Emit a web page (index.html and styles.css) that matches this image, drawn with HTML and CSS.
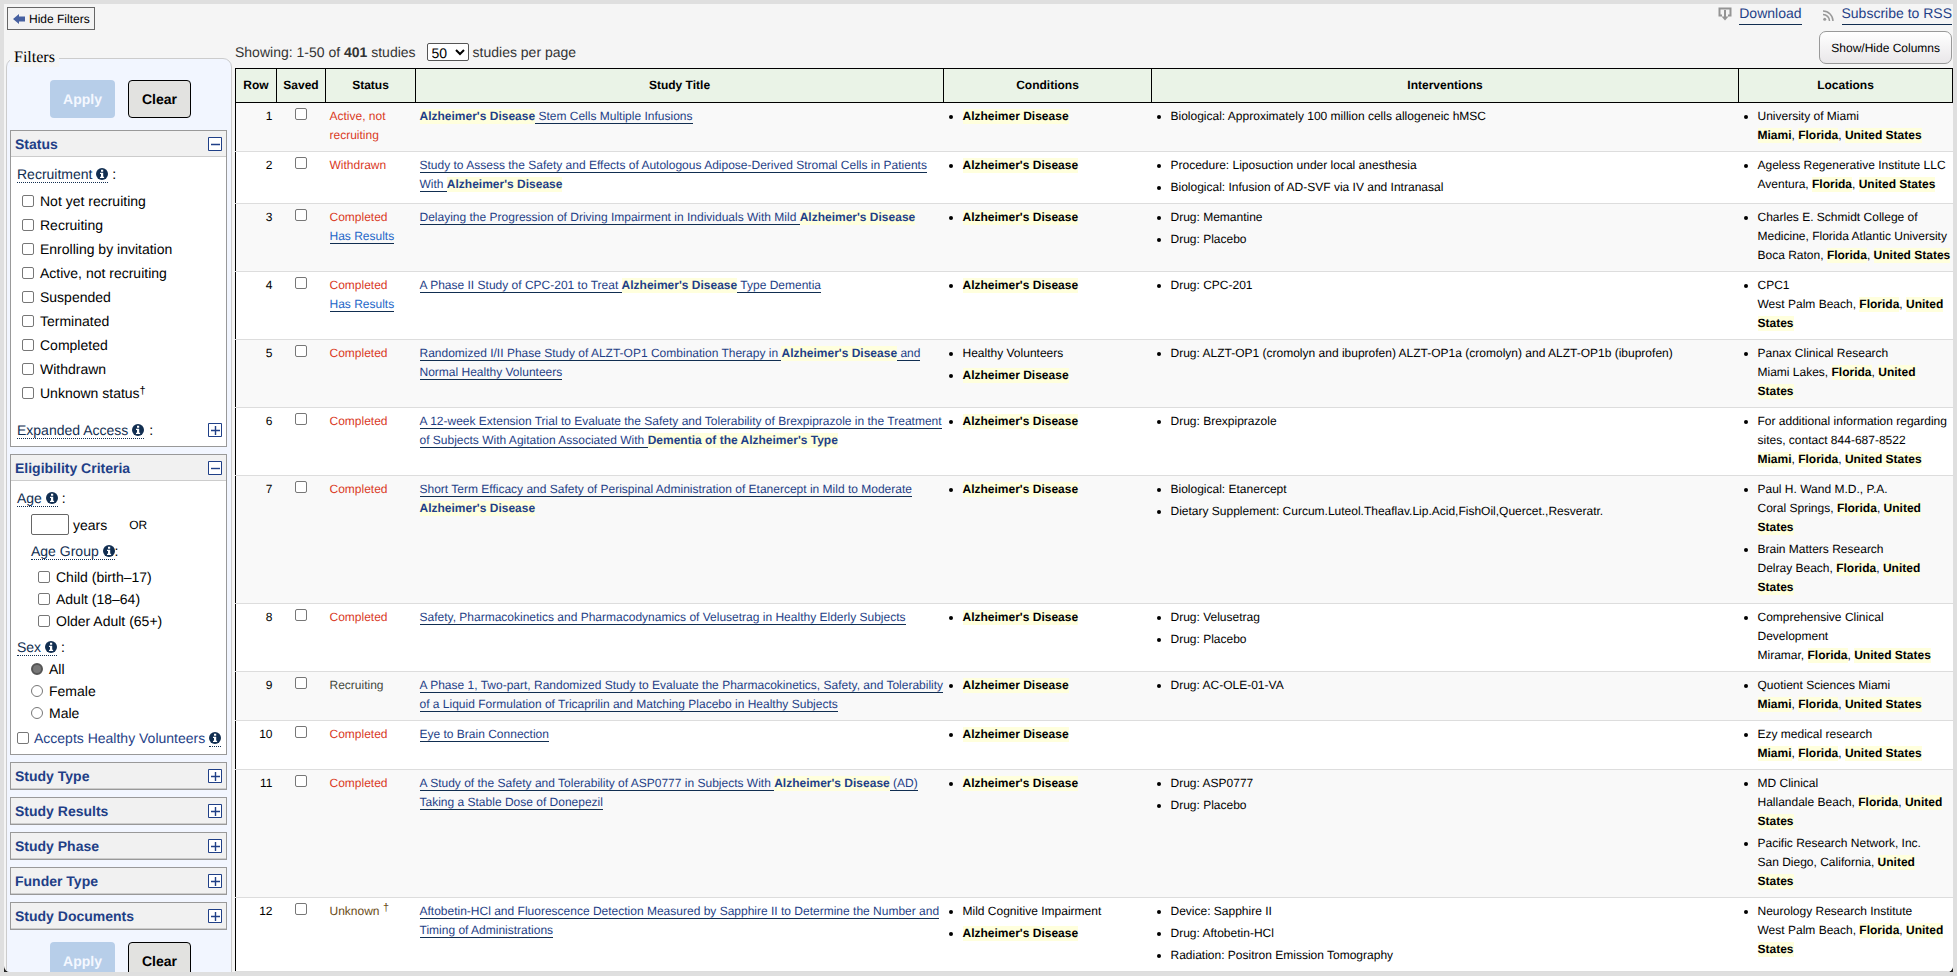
FILE: index.html
```html
<!DOCTYPE html>
<html lang="en">
<head>
<meta charset="utf-8">
<title>Study Search Results</title>
<link rel="stylesheet" href="styles.css">
</head>
<body>
<svg width="0" height="0" class="sprite" aria-hidden="true">
<symbol id="info" viewBox="0 0 12 12"><circle cx="6" cy="6" r="6" fill="#112e51"/><path d="M5 1.8h2.2v1.9H5zM4 4.7h3.2v4h.9v1.4H4V8.700h1V6.100H4z" fill="#fff"/></symbol>
<symbol id="plus" viewBox="0 0 14 14"><path d="M.5.500h13v13H.5z" fill="#fff" stroke="#1f3f87"/><path d="M3 7.500h9M7.500 3v9" stroke="#1f3f87" stroke-width="1.400"/></symbol>
<symbol id="minus" viewBox="0 0 14 14"><path d="M.5.500h13v13H.5z" fill="#fff" stroke="#1f3f87"/><path d="M3 7.500h9" stroke="#1f3f87" stroke-width="1.400"/></symbol>
</svg>
<div class="frame"><div class="page">
<header class="top">
<button class="hide-filters" type="button"><svg width="12" height="10" viewBox="0 0 12 10"><path d="M0 5 6 0v2.500h6v5H6V10z" fill="#4660a0"/></svg>Hide Filters</button>
<nav class="links">
<svg width="14" height="14" viewBox="0 0 14 14"><path d="M4 8.500H1.500v-7h11v7H10M7 3v8" fill="none" stroke="#949494" stroke-width="2"/><path d="M3.500 9.500h7L7 13.500z" fill="#949494"/></svg><a href="#download">Download</a>
<svg class="rss" width="11" height="11" viewBox="0 0 11 11"><circle cx="1.700" cy="9.300" r="1.500" fill="#999"/><path d="M0 4.500A6.500 6.500 0 0 1 6.500 11M0 1a10 10 0 0 1 10 10" fill="none" stroke="#999" stroke-width="1.500"/></svg><a href="#rss">Subscribe to RSS</a>
</nav>
</header>
<div class="main">
<fieldset class="filters">
<legend>Filters</legend>
<div class="actions"><button class="apply" type="button">Apply</button><button class="clear" type="button">Clear</button></div>
<section class="panel">
<h2>Status<svg><use href="#minus"/></svg></h2>
<div class="body">
<p class="term"><a href="#recruitment">Recruitment <svg><use href="#info"/></svg></a> :</p>
<div class="checks">
<label><input type="checkbox">Not yet recruiting</label>
<label><input type="checkbox">Recruiting</label>
<label><input type="checkbox">Enrolling by invitation</label>
<label><input type="checkbox">Active, not recruiting</label>
<label><input type="checkbox">Suspended</label>
<label><input type="checkbox">Terminated</label>
<label><input type="checkbox">Completed</label>
<label><input type="checkbox">Withdrawn</label>
<label><input type="checkbox"><span>Unknown status<sup>†</sup></span></label>
</div>
<p class="term expanded"><a href="#expanded">Expanded Access <svg><use href="#info"/></svg></a> :<svg class="toggle"><use href="#plus"/></svg></p>
</div>
</section>
<section class="panel">
<h2>Eligibility Criteria<svg><use href="#minus"/></svg></h2>
<div class="body">
<p class="term"><a href="#age">Age <svg><use href="#info"/></svg></a> :</p>
<div class="age"><input type="text" id="years"><label for="years">years</label><span class="or">OR</span></div>
<p class="term group"><a href="#group">Age Group <svg><use href="#info"/></svg></a>:</p>
<div class="checks ages">
<label><input type="checkbox">Child (birth–17)</label>
<label><input type="checkbox">Adult (18–64)</label>
<label><input type="checkbox">Older Adult (65+)</label>
</div>
<p class="term">
<a href="#sex">Sex <svg><use href="#info"/></svg></a> :</p>
<div class="checks sexes">
<label><input type="radio" name="sex" checked>All</label>
<label><input type="radio" name="sex">Female</label>
<label><input type="radio" name="sex">Male</label>
</div>
<div class="healthy"><input type="checkbox" id="hv"><label for="hv">Accepts Healthy Volunteers</label><a href="#hv"><svg><use href="#info"/></svg></a></div>
</div>
</section>
<section class="panel"><h2>Study Type<svg><use href="#plus"/></svg></h2></section>
<section class="panel"><h2>Study Results<svg><use href="#plus"/></svg></h2></section>
<section class="panel"><h2>Study Phase<svg><use href="#plus"/></svg></h2></section>
<section class="panel"><h2>Funder Type<svg><use href="#plus"/></svg></h2></section>
<section class="panel"><h2>Study Documents<svg><use href="#plus"/></svg></h2></section>
<div class="actions bottom"><button class="apply" type="button">Apply</button><button class="clear" type="button">Clear</button></div>
</fieldset>
<section class="results">
<div class="bar">
<span>Showing: 1-50 of <b>401</b> studies</span>
<select id="per" aria-label="Studies per page"><option>50</option></select><label for="per">studies per page</label>
<button class="columns" type="button">Show/Hide Columns</button>
</div>
<table>
<colgroup><col class="c-row"><col class="c-saved"><col class="c-status"><col class="c-title"><col class="c-cond"><col class="c-int"><col class="c-loc"></colgroup>
<thead><tr><th>Row</th><th>Saved</th><th>Status</th><th>Study Title</th><th>Conditions</th><th>Interventions</th><th>Locations</th></tr></thead>
<tbody>
<tr><td>1</td><td><input type="checkbox" aria-label="Save study 1"></td><td class="closed">Active, not recruiting</td><td><a href="#s1"><mark>Alzheimer's Disease</mark> Stem Cells Multiple Infusions</a></td><td><ul><li><mark>Alzheimer Disease</mark></li></ul></td><td><ul><li>Biological: Approximately 100 million cells allogeneic hMSC</li></ul></td><td><ul><li>University of Miami<br><mark>Miami</mark>, <mark>Florida</mark>, <mark>United States</mark></li></ul></td></tr>
<tr><td>2</td><td><input type="checkbox" aria-label="Save study 2"></td><td class="closed">Withdrawn</td><td><a href="#s2">Study to Assess the Safety and Effects of Autologous Adipose-Derived Stromal Cells in Patients With <mark>Alzheimer's Disease</mark></a></td><td><ul><li><mark>Alzheimer's Disease</mark></li></ul></td><td><ul><li>Procedure: Liposuction under local anesthesia</li><li>Biological: Infusion of AD-SVF via IV and Intranasal</li></ul></td><td><ul><li>Ageless Regenerative Institute LLC<br>Aventura, <mark>Florida</mark>, <mark>United States</mark></li></ul></td></tr>
<tr><td>3</td><td><input type="checkbox" aria-label="Save study 3"></td><td class="closed">Completed<br><a class="has" href="#r3">Has Results</a></td><td><a href="#s3">Delaying the Progression of Driving Impairment in Individuals With Mild <mark>Alzheimer's Disease</mark></a></td><td><ul><li><mark>Alzheimer's Disease</mark></li></ul></td><td><ul><li>Drug: Memantine</li><li>Drug: Placebo</li></ul></td><td><ul><li>Charles E. Schmidt College of Medicine, Florida Atlantic University<br>Boca Raton, <mark>Florida</mark>, <mark>United States</mark></li></ul></td></tr>
<tr><td>4</td><td><input type="checkbox" aria-label="Save study 4"></td><td class="closed">Completed<br><a class="has" href="#r4">Has Results</a></td><td><a href="#s4">A Phase II Study of CPC-201 to Treat <mark>Alzheimer's Disease</mark> Type Dementia</a></td><td><ul><li><mark>Alzheimer's Disease</mark></li></ul></td><td><ul><li>Drug: CPC-201</li></ul></td><td><ul><li>CPC1<br>West Palm Beach, <mark>Florida</mark>, <mark>United States</mark></li></ul></td></tr>
<tr><td>5</td><td><input type="checkbox" aria-label="Save study 5"></td><td class="closed">Completed</td><td><a href="#s5">Randomized I/II Phase Study of ALZT-OP1 Combination Therapy in <mark>Alzheimer's Disease</mark> and Normal Healthy Volunteers</a></td><td><ul><li>Healthy Volunteers</li><li><mark>Alzheimer Disease</mark></li></ul></td><td><ul><li>Drug: ALZT-OP1 (cromolyn and ibuprofen) ALZT-OP1a (cromolyn) and ALZT-OP1b (ibuprofen)</li></ul></td><td><ul><li>Panax Clinical Research<br>Miami Lakes, <mark>Florida</mark>, <mark>United States</mark></li></ul></td></tr>
<tr><td>6</td><td><input type="checkbox" aria-label="Save study 6"></td><td class="closed">Completed</td><td><a href="#s6">A 12-week Extension Trial to Evaluate the Safety and Tolerability of Brexpiprazole in the Treatment of Subjects With Agitation Associated With <mark>Dementia of the Alzheimer's Type</mark></a></td><td><ul><li><mark>Alzheimer's Disease</mark></li></ul></td><td><ul><li>Drug: Brexpiprazole</li></ul></td><td><ul><li>For additional information regarding sites, contact 844-687-8522<br><mark>Miami</mark>, <mark>Florida</mark>, <mark>United States</mark></li></ul></td></tr>
<tr><td>7</td><td><input type="checkbox" aria-label="Save study 7"></td><td class="closed">Completed</td><td><a href="#s7">Short Term Efficacy and Safety of Perispinal Administration of Etanercept in Mild to Moderate <mark>Alzheimer's Disease</mark></a></td><td><ul><li><mark>Alzheimer's Disease</mark></li></ul></td><td><ul><li>Biological: Etanercept</li><li>Dietary Supplement: Curcum.Luteol.Theaflav.Lip.Acid,FishOil,Quercet.,Resveratr.</li></ul></td><td><ul><li>Paul H. Wand M.D., P.A.<br>Coral Springs, <mark>Florida</mark>, <mark>United States</mark></li><li>Brain Matters Research<br>Delray Beach, <mark>Florida</mark>, <mark>United States</mark></li></ul></td></tr>
<tr><td>8</td><td><input type="checkbox" aria-label="Save study 8"></td><td class="closed">Completed</td><td><a href="#s8">Safety, Pharmacokinetics and Pharmacodynamics of Velusetrag in Healthy Elderly Subjects</a></td><td><ul><li><mark>Alzheimer's Disease</mark></li></ul></td><td><ul><li>Drug: Velusetrag</li><li>Drug: Placebo</li></ul></td><td><ul><li>Comprehensive Clinical Development<br>Miramar, <mark>Florida</mark>, <mark>United States</mark></li></ul></td></tr>
<tr><td>9</td><td><input type="checkbox" aria-label="Save study 9"></td><td class="open">Recruiting</td><td><a href="#s9">A Phase 1, Two-part, Randomized Study to Evaluate the Pharmacokinetics, Safety, and Tolerability of a Liquid Formulation of Tricaprilin and Matching Placebo in Healthy Subjects</a></td><td><ul><li><mark>Alzheimer Disease</mark></li></ul></td><td><ul><li>Drug: AC-OLE-01-VA</li></ul></td><td><ul><li>Quotient Sciences Miami<br><mark>Miami</mark>, <mark>Florida</mark>, <mark>United States</mark></li></ul></td></tr>
<tr><td>10</td><td><input type="checkbox" aria-label="Save study 10"></td><td class="closed">Completed</td><td><a href="#s10">Eye to Brain Connection</a></td><td><ul><li><mark>Alzheimer Disease</mark></li></ul></td><td></td><td><ul><li>Ezy medical research<br><mark>Miami</mark>, <mark>Florida</mark>, <mark>United States</mark></li></ul></td></tr>
<tr><td>11</td><td><input type="checkbox" aria-label="Save study 11"></td><td class="closed">Completed</td><td><a href="#s11">A Study of the Safety and Tolerability of ASP0777 in Subjects With <mark>Alzheimer's Disease</mark> (AD) Taking a Stable Dose of Donepezil</a></td><td><ul><li><mark>Alzheimer's Disease</mark></li></ul></td><td><ul><li>Drug: ASP0777</li><li>Drug: Placebo</li></ul></td><td><ul><li>MD Clinical<br>Hallandale Beach, <mark>Florida</mark>, <mark>United States</mark></li><li>Pacific Research Network, Inc.<br>San Diego, California, <mark>United States</mark></li></ul></td></tr>
<tr><td>12</td><td><input type="checkbox" aria-label="Save study 12"></td><td class="unknown">Unknown <sup>†</sup></td><td><a href="#s12">Aftobetin-HCl and Fluorescence Detection Measured by Sapphire II to Determine the Number and Timing of Administrations</a></td><td><ul><li>Mild Cognitive Impairment</li><li><mark>Alzheimer's Disease</mark></li></ul></td><td><ul><li>Device: Sapphire II</li><li>Drug: Aftobetin-HCl</li><li>Radiation: Positron Emission Tomography</li></ul></td><td><ul><li>Neurology Research Institute<br>West Palm Beach, <mark>Florida</mark>, <mark>United States</mark></li></ul></td></tr>
</tbody>
</table>
</section>
</div>
</div></div>
</body>
</html>
```
FILE: styles.css
```css
* { box-sizing: border-box; }
body {
  margin: 0;
  height: 100vh;
  padding: 4px;
  background: #dfdfdf;
  color: #000;
  font: 14px/18px "Liberation Sans", Arial, sans-serif;
  text-rendering: geometricPrecision;
}
.sprite { position: absolute; }
.frame { height: 100%; background: #222; }
.page {
  height: 100%;
  overflow: hidden;
  background: #f5f5f5;
  border-radius: 0 0 6px 6px;
}
button, input, select { font: inherit; color: inherit; margin: 0; text-rendering: inherit; }
a { color: #1f3f87; text-decoration: none; }

.top { display: flex; justify-content: space-between; align-items: flex-start; height: 27px; padding: 3px 1px 0 3px; }
.hide-filters {
  display: flex; align-items: center; gap: 4px;
  height: 23px; padding: 0 4px 0 5px;
  font-size: 12px;
  background: #f3f3f3; border: 1px solid #666;
}
.links { display: flex; align-items: flex-start; }
.links a { margin-left: 7px; height: 18px; line-height: 13px; border-bottom: 1px solid #112e51; }
.links .rss { margin: 3px 1px 0 21px; }

.main { display: flex; align-items: flex-start; gap: 3px; }

.filters {
  flex: 0 0 226px; min-width: 0;
  margin: 18px 0 0 2px; padding: 3px 4px 16px 3px;
  background: #f2f6ff;
  border: 1px solid #ccc; border-radius: 9px;
}
.filters legend {
  margin-left: 0; padding: 0 4px;
  font: 16px/18px "Liberation Serif", serif;
  background: #f5f5f5;
}
.actions { display: flex; justify-content: center; gap: 13px; padding: 10px 0 12px 4px; }
.actions.bottom { padding-top: 5px; }
.actions button { height: 38px; border-radius: 4px; font-weight: bold; }
.apply { width: 65px; background: #b7cee9; color: #f4f8ff; border: 0; }
.clear { width: 63px; background: #e2e2e0; border: 1px solid #000; }

.panel { margin-bottom: 7px; background: #fff; border: 1px solid #999; }
.panel h2 {
  display: flex; justify-content: space-between; align-items: center;
  margin: 0; height: 26px; padding: 0 4px;
  font-size: 14px; line-height: 18px; color: #1f3f87;
  background: #f1f1f1; border-bottom: 1px solid #ccc;
}
.panel h2 svg, .toggle { width: 14px; height: 14px; }
.body { padding: 8px 4px 7px 6px; }
.term { margin: 0; line-height: 18px; }
.term a { display: inline-block; border-bottom: 1px dotted #112e51; color: #112e51; line-height: 16px; }
.term a svg, .healthy svg { width: 12px; height: 12px; vertical-align: -1px; }
.checks label { display: flex; align-items: center; gap: 6px; height: 24px; padding-left: 5px; }
.checks { padding-top: 6px; }
input[type="checkbox"], input[type="radio"] {
  appearance: none; flex: none;
  width: 12px; height: 12px;
  background: #fff; border: 1px solid #777; border-radius: 2px;
}
input[type="radio"] { border-radius: 50%; }
input[type="radio"]:checked { background: #777; border: 2px solid #555; }
sup { font-size: 11px; line-height: 0; vertical-align: 4px; }
.expanded { display: flex; align-items: center; gap: 5px; margin-top: 16px; }
.toggle { margin-left: auto; }
.age { display: flex; align-items: center; padding: 7px 0 0 14px; }
.age input { width: 38px; height: 21px; margin-right: 4px; background: #fff; border: 1px solid #666; border-radius: 2px; }
.or { margin-left: 22px; font-size: 12px; }
.group { margin: 7px 0 0 14px; }
.ages, .sexes { padding-top: 6px; }
.ages label { height: 22px; padding-left: 21px; }
.ages { padding-bottom: 6px; }
.sexes { padding-top: 2px; }
.sexes label { height: 22px; padding-left: 14px; }
.healthy { display: flex; align-items: center; gap: 4px; padding-top: 5px; }
.healthy label { color: #1f3f87; white-space: nowrap; padding-left: 1px; }
.healthy a { border-bottom: 1px dotted #112e51; height: 18px; }

.results { flex: 1; min-width: 0; }
.bar { display: flex; align-items: center; height: 37px; color: #333; padding-top: 5px; }
.bar select { width: 42px; height: 18px; margin: 0 4px 0 11px; padding: 0; color: #000; background: #fff; border: 1px solid #555; border-radius: 2px; }
.columns {
  align-self: flex-start; flex: none;
  height: 33px; margin: -5px 1px 0 auto; padding: 0 11px;
  font-size: 12px; color: #000;
  background: linear-gradient(#fff, #e9e7e9);
  border: 1px solid #999; border-radius: 7px;
}
table { width: 100%; table-layout: fixed; border-collapse: collapse; border-left: 1px solid #000; font-size: 12px; line-height: 19px; background: #fff; }
.c-row { width: 41px; }
.c-saved { width: 49px; }
.c-status { width: 90px; }
.c-title { width: 528px; }
.c-cond { width: 208px; }
.c-loc { width: 214px; }
th { height: 34px; padding: 0; background: #eaf3e7; border: 1px solid #000; }
td { padding: 4px 0 6px 4px; vertical-align: top; border-bottom: 1px solid #ddd; }
td:nth-child(1) { text-align: right; padding-right: 4px; }
td:nth-child(2) { text-align: center; padding: 5px 4px; line-height: 12px; }
tbody tr:nth-child(odd) { background: #f9f9f9; }
td a { border-bottom: 1px solid #112e51; }
mark { background: #ffffdd; color: inherit; font-weight: bold; padding-bottom: 1px; }
ul { margin: 0; padding: 0 0 0 15px; }
li + li { margin-top: 3px; }
.closed { color: #d9391f; }
.open { color: #45493c; }
.unknown { color: #6b4c16; }
.has { color: #2467c8; }
```
